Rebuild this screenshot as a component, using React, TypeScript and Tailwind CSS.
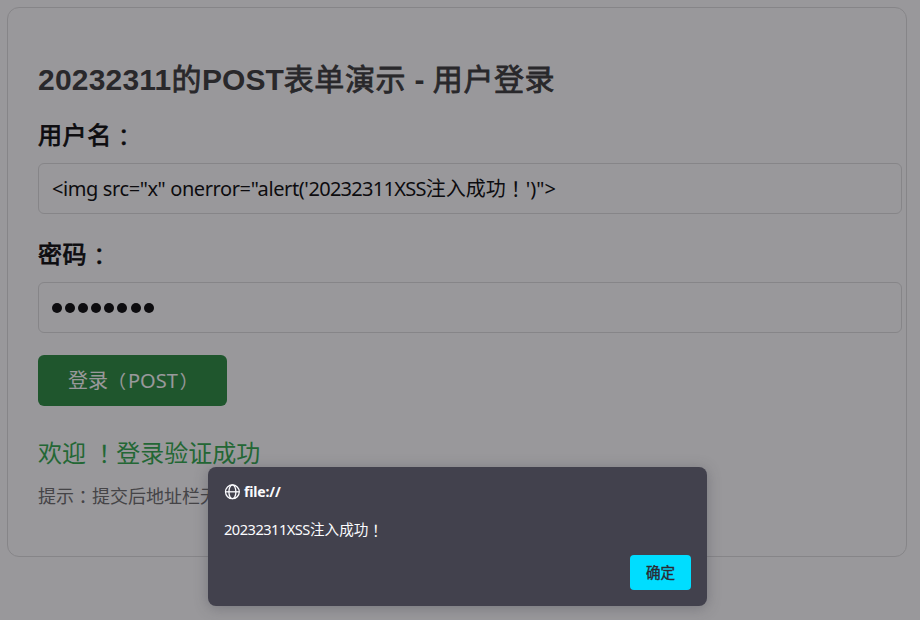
import type { ReactNode } from 'react';

const PASSWORD_LENGTH = 8;

// Full-width punctuation, centred in its box
function Mark({ children }: { children: ReactNode }) {
  return <span className="relative top-px font-['Noto_Sans_CJK_TC',sans-serif]">{children}</span>;
}

// Chinese text in a weight between regular and bold
function Heavy({ children }: { children: ReactNode }) {
  return (
    <span className="font-normal tracking-[0.6px] [-webkit-text-stroke:0.8px_currentColor]">
      {children}
    </span>
  );
}

interface FieldProps {
  label: string;
  children: ReactNode;
}

function Field({ label, children }: FieldProps) {
  return (
    <div>
      <p className="h-9 text-2xl leading-9 text-black">
        <Heavy>{label}</Heavy>
        <span className="relative top-px [-webkit-text-stroke:0.4px_currentColor]">
          <Mark>：</Mark>
        </span>
      </p>
      <div className="mt-[11px] flex h-[51px] items-center rounded-md border border-[#ddd] px-[13px] text-xl text-black">
        {children}
      </div>
    </div>
  );
}

function GlobeIcon() {
  return (
    <svg
      className="size-4"
      viewBox="0 0 16 16"
      fill="none"
      stroke="currentColor"
      strokeWidth="1.3"
    >
      <circle cx="8.4" cy="7.8" r="6.9" />
      <ellipse cx="8.4" cy="7.8" rx="3.5" ry="6.9" />
      <path d="M1.5 7.8h13.8" />
    </svg>
  );
}

function AlertDialog() {
  return (
    <div
      role="alertdialog"
      className="absolute top-[467px] left-[208px] flex h-[139px] w-[499px] flex-col rounded-lg bg-[#42414d] p-4 text-[#fbfbfe] shadow-[0_2px_14px_rgba(58,57,68,0.35)]"
    >
      <div className="flex h-[18px] items-center gap-1 text-sm font-bold">
        <GlobeIcon />
        <span className="tracking-[-0.15px]">file://</span>
      </div>
      <p className="mt-[18px] h-5 text-[14.6px] leading-5">
        <span className="inline-block w-[86px] tracking-[-0.5px]">20232311XSS</span>注入成功<Mark>！</Mark>
      </p>
      <button className="mt-auto h-[35px] w-[61px] self-end rounded bg-[#00ddff] text-[14.6px] text-[#2b2a33] [-webkit-text-stroke:0.4px_currentColor]">
        确定
      </button>
    </div>
  );
}

export default function App() {
  return (
    <div className="relative h-[620px] w-[920px] overflow-hidden bg-white font-['Noto_Sans','Noto_Sans_CJK_SC',sans-serif]">
      <div className="p-[7px]">
        <main className="h-[550px] w-[900px] rounded-xl border border-[#ddd] pt-[49px] pr-1 pl-[30px]">
          <h1 className="mb-[14px] h-[45px] font-['Liberation_Sans','Noto_Sans_CJK_SC',sans-serif] text-[30px] leading-[45px] font-bold text-[#333]">
            <span className="tracking-[0.2px]">20232311</span>
            <Heavy>的</Heavy>POST<Heavy>表单演示</Heavy> - <Heavy>用户登录</Heavy>
          </h1>
          <div className="flex flex-col gap-[21px]">
            <Field label="用户名">
              <span className="whitespace-pre">
                <span className="tracking-[-0.4px]">{'<img src="x" onerror="alert(\''}</span>
                <span className="tracking-[-0.72px]">20232311XSS</span>
                注入成功
                <Mark>！</Mark>
                {'\')">'}
              </span>
            </Field>
            <Field label="密码">
              <div className="flex gap-[3.1px]">
                {Array.from({ length: PASSWORD_LENGTH }, (_, i) => (
                  <span key={i} className="size-[10px] shrink-0 rounded-full bg-black" />
                ))}
              </div>
            </Field>
          </div>
          <button className="mt-[22px] flex h-[51px] w-[189px] items-center rounded-md bg-[#218838] pl-[30px] text-xl text-white">
            登录
            <span className="w-5 text-left text-[18px]">
              <Mark>（</Mark>
            </span>
            POST
            <span className="w-5 text-right text-[18px]">
              <Mark>）</Mark>
            </span>
          </button>
          <p className="mt-[28px] h-9 text-2xl leading-9 whitespace-pre text-[#28a745]">
            欢迎 <Mark>！</Mark>登录验证成功
          </p>
          <p className="mt-[11px] h-7 text-lg leading-7 text-[#666]">
            提示<Mark>：</Mark>提交后地址栏无
          </p>
        </main>
      </div>
      <div className="absolute inset-0 bg-[rgba(28,27,34,0.45)]" />
      <AlertDialog />
    </div>
  );
}
